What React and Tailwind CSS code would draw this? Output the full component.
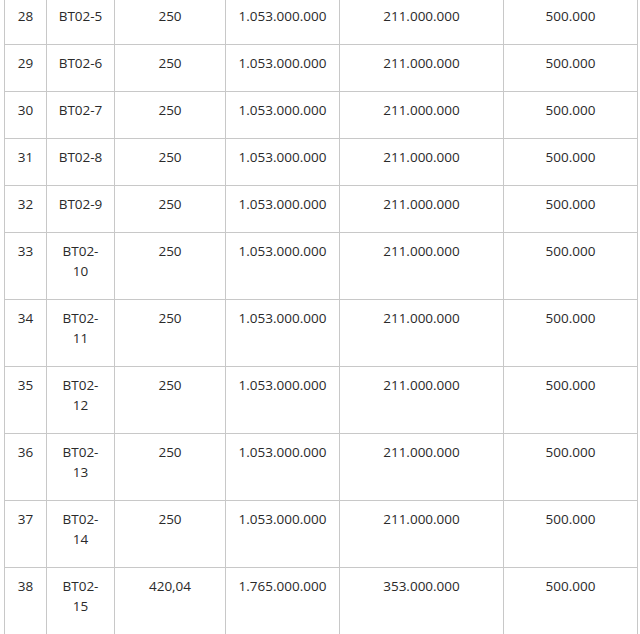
const rows = [
  ['28', 'BT02-5', '250', '1.053.000.000', '211.000.000', '500.000'],
  ['29', 'BT02-6', '250', '1.053.000.000', '211.000.000', '500.000'],
  ['30', 'BT02-7', '250', '1.053.000.000', '211.000.000', '500.000'],
  ['31', 'BT02-8', '250', '1.053.000.000', '211.000.000', '500.000'],
  ['32', 'BT02-9', '250', '1.053.000.000', '211.000.000', '500.000'],
  ['33', 'BT02-10', '250', '1.053.000.000', '211.000.000', '500.000'],
  ['34', 'BT02-11', '250', '1.053.000.000', '211.000.000', '500.000'],
  ['35', 'BT02-12', '250', '1.053.000.000', '211.000.000', '500.000'],
  ['36', 'BT02-13', '250', '1.053.000.000', '211.000.000', '500.000'],
  ['37', 'BT02-14', '250', '1.053.000.000', '211.000.000', '500.000'],
  ['38', 'BT02-15', '420,04', '1.765.000.000', '353.000.000', '500.000'],
];

export default function App() {
  return (
    <div className="bg-white h-[634px] overflow-hidden pl-[4px] font-['Open_Sans',sans-serif] text-[13.5px] leading-[20px] text-[#2a2a2a]">
      <table className="-mt-[3px] w-[633px] table-fixed border-collapse">
        <colgroup>
          <col className="w-[42px]" />
          <col className="w-[68px]" />
          <col className="w-[111px]" />
          <col className="w-[114px]" />
          <col className="w-[164px]" />
          <col className="w-[134px]" />
        </colgroup>
        <tbody>
          {rows.map((r) => (
            <tr key={r[0]}>
              {r.map((c, i) => (
                <td
                  key={i}
                  className={`border border-[#c8c8c8] align-top text-center pt-[8px] pb-[18px] ${i === 1 ? 'px-[9px]' : 'px-1'}`}
                >
                  {c}
                </td>
              ))}
            </tr>
          ))}
        </tbody>
      </table>
    </div>
  );
}
